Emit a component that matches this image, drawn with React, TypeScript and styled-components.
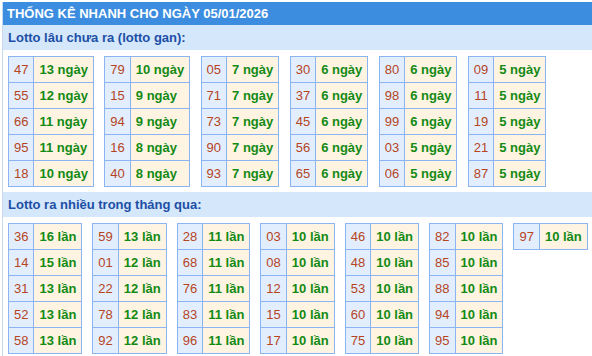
import React from "react";
import styled, { createGlobalStyle } from "styled-components";

const GlobalStyle = createGlobalStyle`
  html, body {
    margin: 0;
    padding: 0;
    background: #ffffff;
    overflow: hidden;
  }
  body {
    font-family: "Liberation Sans", Arial, sans-serif;
    font-size: 13px;
  }
`;

const Wrapper = styled.div`
  margin: 2px 0 0 2px;
  width: 600px;
  border-left: 1px solid #c8d9ee;
  background: #ffffff;
`;

const TitleBar = styled.div`
  height: 23px;
  background: #3c8ddf;
  color: #ffffff;
  font-weight: bold;
  font-size: 13px;
  line-height: 23px;
  padding-left: 4px;
  white-space: nowrap;
`;

const SectionTitle = styled.div`
  height: 25px;
  background: #d4e7fb;
  color: #1d4fa6;
  font-weight: bold;
  font-size: 13px;
  line-height: 25px;
  padding-left: 5px;
  white-space: nowrap;
`;

const Group = styled.div<{ $gap: number }>`
  display: flex;
  align-items: flex-start;
  gap: ${(p) => p.$gap}px;
  padding: 6px 0 5px 5px;
`;

const Table = styled.table`
  border-collapse: collapse;
  font-size: 13px;
  line-height: 15px;
`;

const NumCell = styled.td`
  border: 1px solid #8db4f2;
  background: #e2eefd;
  color: #b5441f;
  padding: 5px 5px;
  text-align: center;
  white-space: nowrap;
`;

const ValCell = styled.td`
  border: 1px solid #8db4f2;
  background: #fff4e2;
  color: #138a14;
  font-weight: bold;
  padding: 5px 5px;
  white-space: nowrap;
`;

type Pair = [string, number];

const gan: Pair[][] = [
  [["47", 13], ["55", 12], ["66", 11], ["95", 11], ["18", 10]],
  [["79", 10], ["15", 9], ["94", 9], ["16", 8], ["40", 8]],
  [["05", 7], ["71", 7], ["73", 7], ["90", 7], ["93", 7]],
  [["30", 6], ["37", 6], ["45", 6], ["56", 6], ["65", 6]],
  [["80", 6], ["98", 6], ["99", 6], ["03", 5], ["06", 5]],
  [["09", 5], ["11", 5], ["19", 5], ["21", 5], ["87", 5]],
];

const nhieu: Pair[][] = [
  [["36", 16], ["14", 15], ["31", 13], ["52", 13], ["58", 13]],
  [["59", 13], ["01", 12], ["22", 12], ["78", 12], ["92", 12]],
  [["28", 11], ["68", 11], ["76", 11], ["83", 11], ["96", 11]],
  [["03", 10], ["08", 10], ["12", 10], ["15", 10], ["17", 10]],
  [["46", 10], ["48", 10], ["53", 10], ["60", 10], ["75", 10]],
  [["82", 10], ["85", 10], ["88", 10], ["94", 10], ["95", 10]],
  [["97", 10]],
];

function StatTable({ rows, unit }: { rows: Pair[]; unit: string }) {
  return (
    <Table>
      <tbody>
        {rows.map(([n, v]) => (
          <tr key={n}>
            <NumCell>{n}</NumCell>
            <ValCell>
              {v} {unit}
            </ValCell>
          </tr>
        ))}
      </tbody>
    </Table>
  );
}

export default function App() {
  return (
    <>
      <GlobalStyle />
      <Wrapper>
        <TitleBar>THỐNG KÊ NHANH CHO NGÀY 05/01/2026</TitleBar>
        <SectionTitle>Lotto lâu chưa ra (lotto gan):</SectionTitle>
        <Group $gap={10.4}>
          {gan.map((rows, i) => (
            <StatTable key={i} rows={rows} unit="ngày" />
          ))}
        </Group>
        <SectionTitle>Lotto ra nhiều trong tháng qua:</SectionTitle>
        <Group $gap={10}>
          {nhieu.map((rows, i) => (
            <StatTable key={i} rows={rows} unit="lần" />
          ))}
        </Group>
      </Wrapper>
    </>
  );
}
